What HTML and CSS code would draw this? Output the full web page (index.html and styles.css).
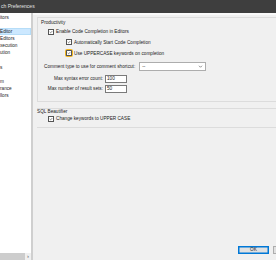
FILE: index.html
```html
<!DOCTYPE html>
<html lang="en">
<head>
	<meta charset="UTF-8">
	<title>Preferences</title>
	<link rel="stylesheet" href="styles.css">
</head>
<body>
	<div class="window">
		<div class="titlebar">ch Preferences</div>
		<div class="main">
			<div class="sidebar">
				<ul class="tree">
					<li>itors</li>
					<li></li>
					<li class="selected">Editor</li>
					<li>Editors</li>
					<li>xecution</li>
					<li>ution</li>
					<li></li>
					<li>s</li>
					<li></li>
					<li>m</li>
					<li>rance</li>
					<li>llors</li>
				</ul>
				<div class="hscroll">
					<span class="thumb"></span>
					<span class="arrow">›</span>
				</div>
			</div>
			<div class="content">
				<!-- Productivity -->
				<div class="group productivity">
					<div class="group-title">Productivity</div>
					<div class="check-row row-1">
						<span class="check"><svg viewBox="0 0 6 6"><path d="M1.1 3 L2.4 4.3 L4.9 1.6" /></svg></span>
						<span>Enable Code Completion in Editors</span>
					</div>
					<div class="check-row row-2">
						<span class="check"><svg viewBox="0 0 6 6"><path d="M1.1 3 L2.4 4.3 L4.9 1.6" /></svg></span>
						<span>Automatically Start Code Completion</span>
					</div>
					<div class="check-row row-3">
						<span class="check focus"><svg viewBox="0 0 6 6"><path d="M1.1 3 L2.4 4.3 L4.9 1.6" /></svg></span>
						<span>Use UPPERCASE keywords on completion</span>
					</div>
					<div class="combo-row">
						<span>Comment type to use for comment shortcut:</span>
						<div class="combo">
							<span>--</span>
							<svg viewBox="0 0 6 4"><path d="M1 1 L3 3 L5 1" /></svg>
						</div>
					</div>
					<div class="fields">
						<label>Max syntax error count:</label>
						<div class="field">100</div>
						<label>Max number of result sets:</label>
						<div class="field">50</div>
					</div>
				</div>
				<!-- SQL Beautifier -->
				<div class="group beautifier">
					<div class="group-title">SQL Beautifier</div>
					<div class="check-row row-1">
						<span class="check"><svg viewBox="0 0 6 6"><path d="M1.1 3 L2.4 4.3 L4.9 1.6" /></svg></span>
						<span>Change keywords to UPPER CASE</span>
					</div>
				</div>
				<div class="buttons">
					<button class="btn default">OK</button>
					<button class="btn" aria-label="Cancel"></button>
				</div>
			</div>
		</div>
	</div>
</body>
</html>
```

FILE: styles.css
```css
*{ margin:0; padding:0; box-sizing:border-box; }
li{ list-style:none; }

body{ font-family:"Liberation Sans", Arial, sans-serif; font-size:4.7px; color:#1a1a1a; }

.window{ width:276px; height:260px; display:flex; flex-direction:column; overflow:hidden; background:#f0f0f0; }
.titlebar{ height:13px; background:#3e3e3e; color:#e4e4e4; font-size:5px; line-height:13px; padding-left:1px; white-space:nowrap; }
.main{ flex:1; display:flex; min-height:0; }

/* left tree */
.sidebar{ width:33px; background:#fff; border-right:2px solid #cfcfcf; display:flex; flex-direction:column; }
.tree{ flex:1; padding-top:1px; }
.tree li{ height:7.1px; line-height:7.1px; white-space:nowrap; overflow:hidden; }
.tree .selected{ background:#cce8ff; box-shadow:inset 0 0 0 1px #b6ddf8; }
.hscroll{ height:7px; display:flex; background:#f0f0f0; }
.hscroll .thumb{ width:25px; background:#cdcdcd; }
.hscroll .arrow{ flex:1; text-align:center; font-size:6px; line-height:7px; color:#555; }

/* right page */
.content{ flex:1; min-width:0; display:flex; flex-direction:column; padding:2px 0 6px 4px; border-top:2px solid #f9f9f9; overflow:hidden; }
.group{ border:1px solid #dcdcdc; border-right:none; padding:1px 0 0 3px; flex:none; }
.group-title{ height:7px; line-height:7px; }
.productivity{ height:85px; }
.beautifier{ height:20px; margin-top:6px; padding:0; border-left:none; }
.beautifier .group-title{ height:6px; line-height:6px; }

.check-row{ display:flex; align-items:center; gap:2px; height:7px; white-space:nowrap; }
.productivity .row-1{ margin:2px 0 0 7px; }
.productivity .row-2{ margin:3.5px 0 0 25px; }
.productivity .row-3{ margin:4px 0 0 25px; }
.beautifier .row-1{ margin:0 0 0 11px; }
.check{ width:6px; height:6px; border:1px solid #555; background:#fff; display:flex; flex:none; }
.check svg{ width:100%; height:100%; fill:none; stroke:#333; stroke-width:0.85; }
.check.focus{ outline:1.5px solid #f2b51f; outline-offset:0.5px; border-radius:0.5px; }

.combo-row{ display:flex; align-items:center; gap:4px; height:9px; margin:5px 0 0 3px; white-space:nowrap; }
.combo{ width:67px; height:9px; background:#fff; border:1px solid #adadad; display:flex; align-items:center; justify-content:space-between; padding:0 2px; flex:none; }
.combo svg{ width:5px; height:3px; fill:none; stroke:#444; stroke-width:0.8; }

.fields{ display:grid; grid-template-columns:59px 22px; column-gap:2px; row-gap:2px; margin:4.5px 0 0 3px; }
.fields label{ height:8px; line-height:8px; text-align:right; white-space:nowrap; }
.fields .field{ height:8px; line-height:6px; background:#fff; border:1px solid #7a7a7a; padding-left:1px; }

.buttons{ margin-top:auto; display:flex; gap:4px; padding-left:201px; }
.btn{ width:31px; height:8px; flex:none; border:1px solid #adadad; background:#e1e1e1; font:inherit; color:#1e1e1e; line-height:6px; }
.btn.default{ border-color:#0078d7; box-shadow:inset 0 0 0 0.5px #0078d7; }
```
